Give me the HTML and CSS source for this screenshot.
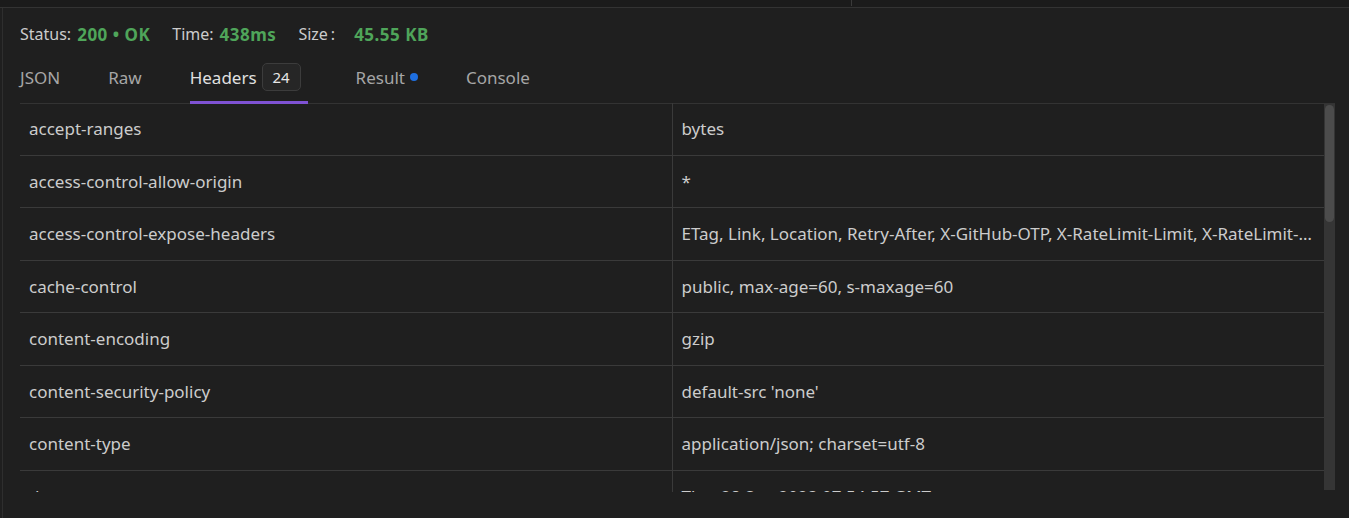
FILE: index.html
```html
<!DOCTYPE html>
<html>
<head>
<meta charset="utf-8">
<link rel="stylesheet" href="styles.css">
</head>
<body>
<div class="topbar"><div class="topbar-left"></div><div class="topbar-right"></div></div>
<div class="app">
  <div class="status">
    <span class="label">Status:</span><span class="ok">200 • OK</span>
    <span class="label sep">Time:</span><span class="ok">438ms</span>
    <span class="label sep">Size<span class="colon">:</span></span><span class="ok">45.55 KB</span>
  </div>
  <div class="tabs">
    <div class="tab">JSON</div>
    <div class="tab">Raw</div>
    <div class="tab active">Headers <span class="badge">24</span></div>
    <div class="tab">Result<span class="dot"></span></div>
    <div class="tab">Console</div>
  </div>
  <div class="table-area">
    <div class="table-wrap">
      <table class="headers">
        <tr><td>accept-ranges</td><td>bytes</td></tr>
        <tr><td>access-control-allow-origin</td><td>*</td></tr>
        <tr><td>access-control-expose-headers</td><td>ETag, Link, Location, Retry-After, X-GitHub-OTP, X-RateLimit-Limit, X-RateLimit-Remaining, X-RateLimit-Used, X-RateLimit-Resource, X-RateLimit-Reset, X-OAuth-Scopes</td></tr>
        <tr><td>cache-control</td><td>public, max-age=60, s-maxage=60</td></tr>
        <tr><td>content-encoding</td><td>gzip</td></tr>
        <tr><td>content-security-policy</td><td>default-src 'none'</td></tr>
        <tr><td>content-type</td><td>application/json; charset=utf-8</td></tr>
        <tr><td>date</td><td>Thu, 28 Sep 2023 07:54:57 GMT</td></tr>
        <tr><td>etag</td><td>W/"4f2c8e9b1d7a6f3e5c0b2a9d8e7f6a5b"</td></tr>
        <tr><td>last-modified</td><td>Wed, 27 Sep 2023 18:12:04 GMT</td></tr>
        <tr><td>referrer-policy</td><td>origin-when-cross-origin, strict-origin-when-cross-origin</td></tr>
        <tr><td>server</td><td>GitHub.com</td></tr>
        <tr><td>strict-transport-security</td><td>max-age=31536000; includeSubdomains; preload</td></tr>
        <tr><td>vary</td><td>Accept, Accept-Encoding, Accept, X-Requested-With</td></tr>
        <tr><td>x-content-type-options</td><td>nosniff</td></tr>
        <tr><td>x-frame-options</td><td>deny</td></tr>
        <tr><td>x-github-api-version-selected</td><td>2022-11-28</td></tr>
        <tr><td>x-github-media-type</td><td>github.v3; format=json</td></tr>
        <tr><td>x-github-request-id</td><td>C1A2:3B4D:5E6F70:6A7B8C:65153A41</td></tr>
        <tr><td>x-ratelimit-limit</td><td>60</td></tr>
        <tr><td>x-ratelimit-remaining</td><td>57</td></tr>
        <tr><td>x-ratelimit-reset</td><td>1695890097</td></tr>
        <tr><td>x-ratelimit-resource</td><td>core</td></tr>
        <tr><td>x-ratelimit-used</td><td>3</td></tr>
      </table>
    </div>
    <div class="scrollbar"><div class="thumb"></div></div>
  </div>
</div>
</body>
</html>
```
FILE: styles.css
```css
html, body {
  margin: 0;
  padding: 0;
  background: #1f1f1f;
  height: 100%;
  overflow: hidden;
}
body {
  font-family: "Noto Sans", "Open Sans", sans-serif;
  font-size: 17px;
  color: #cccccc;
}
.topbar {
  display: flex;
  height: 7px;
  background: #1b1b1b;
  border-bottom: 1px solid #333333;
}
.topbar-left {
  width: 851px;
  border-right: 1px solid #3a3a3a;
  margin-bottom: 1px;
}
.app {
  margin-left: 2px;
  border-left: 1px solid #2e2e2e;
  padding: 0 14px 0 17px;
  height: calc(100% - 8px);
}
.status {
  display: flex;
  align-items: center;
  height: 24px;
  padding-top: 14px;
  font-size: 16px;
  color: #cccccc;
  white-space: nowrap;
}
.status .label { margin-right: 6px; }
.status .sep { margin-left: 22px; }
.status .colon { margin-left: 3px; margin-right: 13px; }
.ok {
  color: #4fa55a;
  font-weight: 700;
  font-size: 17px;
  letter-spacing: 0.5px;
}
.tabs {
  display: flex;
  gap: 48px;
  margin-top: 7px;
  border-bottom: 1px solid #333333;
}
.tab {
  display: flex;
  align-items: center;
  height: 48px;
  color: #a6a6a6;
  border-bottom: 3px solid transparent;
  margin-bottom: -1px;
}
.tab.active {
  color: #e0e0e0;
  border-bottom-color: #7f52d4;
  padding-right: 7px;
}
.badge {
  display: inline-flex;
  align-items: center;
  justify-content: center;
  margin-left: 5px;
  width: 37px;
  height: 26px;
  border: 1px solid #3c3c3c;
  border-radius: 5px;
  background: #262626;
  color: #e6e6e6;
  font-size: 15px;
}
.dot {
  width: 8px;
  height: 8px;
  border-radius: 50%;
  background: #1e6fe0;
  margin-left: 5px;
}
.table-area {
  display: flex;
  height: 389px;
  margin-top: -1px;
}
.table-wrap {
  flex: 1;
  min-width: 0;
  overflow: hidden;
}
.scrollbar {
  width: 11px;
  margin-top: 1px;
  margin-bottom: 2px;
  background: #353535;
  display: flex;
  flex-direction: column;
}
.thumb {
  height: 117px;
  margin: 1px 1px 0 1px;
  border-radius: 5px;
  background: #4c4c4c;
}
.headers {
  width: 100%;
  border-collapse: collapse;
  table-layout: fixed;
}
.headers td {
  height: 51.5px;
  padding: 0 9px;
  border-bottom: 1px solid #3a3a3a;
  color: #cccccc;
  white-space: nowrap;
  overflow: hidden;
  text-overflow: ellipsis;
  vertical-align: middle;
}
.headers td:first-child {
  border-right: 1px solid #3a3a3a;
}
```
